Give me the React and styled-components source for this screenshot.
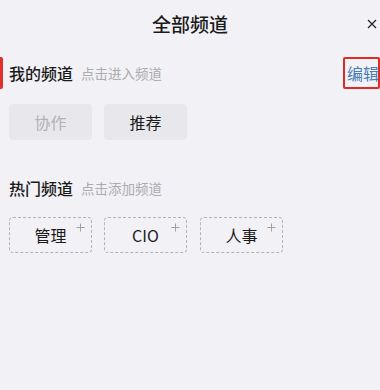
import React from "react";
import styled, { createGlobalStyle } from "styled-components";

const GlobalStyle = createGlobalStyle`
  html, body {
    margin: 0;
    padding: 0;
    background: #f2f1f6;
  }
  body {
    font-family: "Noto Sans CJK SC", "Noto Sans", sans-serif;
    color: #1a1a1a;
  }
`

const Page = styled.div`
  width: 380px;
  height: 390px;
  background: #f2f1f6;
  overflow: hidden;
`

const Header = styled.header`
  display: grid;
  grid-template-columns: 1fr auto 1fr;
  align-items: center;
  height: 45px;
  padding-top: 2px;
  box-sizing: border-box;
`

const Title = styled.h1`
  grid-column: 2;
  margin: 0;
  font-size: 19px;
  font-weight: 500;
  line-height: 1;
  color: #1a1a1a;
`

const CloseButton = styled.button`
  grid-column: 3;
  justify-self: end;
  margin-right: 3px;
  width: 10px;
  height: 10px;
  padding: 0;
  border: none;
  background: none;
  display: flex;
  align-items: center;
  justify-content: center;
`

const SectionHead = styled.div`
  display: flex;
  align-items: center;
  height: 32px;
  margin-top: ${({ $top }) => $top}px;
`

const Marker = styled.div`
  width: 3px;
  align-self: stretch;
  background: ${({ $on }) => ($on ? "#e0322b" : "transparent")};
  border-radius: 0 2px 2px 0;
  margin-right: 6px;
`

const SectionTitle = styled.span`
  font-size: 16px;
  font-weight: 500;
  color: #1a1a1a;
`

const Hint = styled.span`
  margin-left: 8px;
  font-size: 13.5px;
  color: #ababb0;
`

const EditButton = styled.button`
  margin-left: auto;
  height: 32px;
  width: 37px;
  padding: 0 0 0 2px;
  border: 2px solid #dd2c25;
  border-radius: 2px;
  background: transparent;
  font-family: inherit;
  font-size: 16px;
  color: #4a7db3;
  display: flex;
  align-items: center;
  justify-content: flex-start;
  white-space: nowrap;
  overflow: hidden;
`

const ChipRow = styled.div`
  display: flex;
  gap: 12px;
  padding-left: 9px;
  margin-top: ${({ $top }) => $top}px;
`

const Chip = styled.div`
  position: relative;
  box-sizing: border-box;
  width: 83px;
  height: 36px;
  display: flex;
  align-items: center;
  justify-content: center;
  border-radius: 4px;
  font-size: 16px;
  background: ${({ $dashed }) => ($dashed ? "transparent" : "#e8e8ec")};
  border: ${({ $dashed }) => ($dashed ? "1px dashed #b4b4b8" : "none")};
  color: ${({ $muted }) => ($muted ? "#b2b2b6" : "#1a1a1a")};
`

const Plus = styled.svg`
  position: absolute;
  top: 5px;
  right: 6px;
`

const myChannels = [
  { name: "协作", fixed: true },
  { name: "推荐", fixed: false },
]

const hotChannels = ["管理", "CIO", "人事"]

export default function App() {
  return (
    <Page>
      <GlobalStyle />
      <Header>
        <Title>全部频道</Title>
        <CloseButton aria-label="close">
          <svg width="10" height="10" viewBox="0 0 10 10">
            <path d="M1 1L9 9M9 1L1 9" stroke="#222" strokeWidth="1.2" fill="none" />
          </svg>
        </CloseButton>
      </Header>

      <SectionHead $top={12}>
        <Marker $on />
        <SectionTitle>我的频道</SectionTitle>
        <Hint>点击进入频道</Hint>
        <EditButton>编辑</EditButton>
      </SectionHead>

      <ChipRow $top={15}>
        {myChannels.map(c => (
          <Chip key={c.name} $muted={c.fixed}>{c.name}</Chip>
        ))}
      </ChipRow>

      <SectionHead $top={32}>
        <Marker />
        <SectionTitle>热门频道</SectionTitle>
        <Hint>点击添加频道</Hint>
      </SectionHead>

      <ChipRow $top={13}>
        {hotChannels.map((name, i) => (
          <Chip key={name} $dashed style={i === 2 ? { marginLeft: 1 } : undefined}>
            {name}
            <Plus width="9" height="9" viewBox="0 0 9 9">
              <path d="M4.5 0.5V8.5M0.5 4.5H8.5" stroke="#a0a0a5" strokeWidth="1" fill="none" />
            </Plus>
          </Chip>
        ))}
      </ChipRow>
    </Page>
  )
}
